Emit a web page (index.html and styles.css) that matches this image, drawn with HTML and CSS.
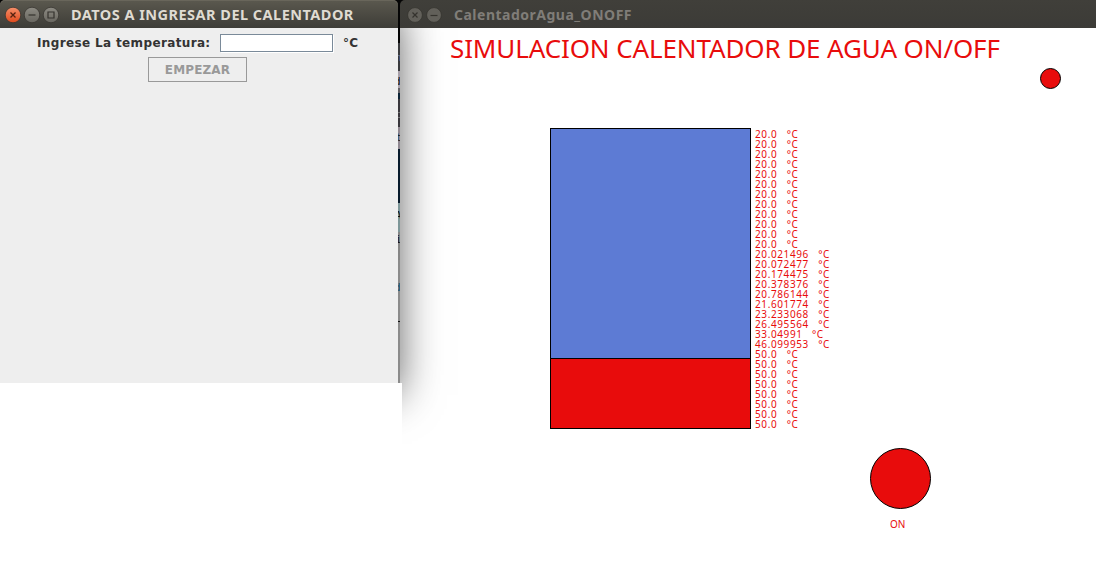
FILE: index.html
```html
<!DOCTYPE html>
<html lang="es">
<head>
<meta charset="utf-8">
<title>CalentadorAgua_ONOFF</title>
<link rel="stylesheet" href="styles.css">
</head>
<body>
<div class="desktop">
  <div class="backdrop"><span class="bit b1">n</span><span class="bit b2">d</span><span class="bit b3">c</span><span class="bit b4">t</span><span class="bit b5">A</span><span class="bit b6">i</span><span class="bit b7">d</span><span class="bit b8">L</span></div>
  <section class="window sim">
    <header class="titlebar dim">
      <svg class="ctl" viewBox="0 0 16 16"><circle cx="8" cy="8" r="7.4"/><path d="M5.5 5.5l5 5M10.5 5.5l-5 5"/></svg>
      <svg class="ctl" viewBox="0 0 16 16"><circle cx="8" cy="8" r="7.4"/><path d="M4.5 8.5h7"/></svg>
      <span class="caption sim-caption">CalentadorAgua_ONOFF</span>
    </header>
    <main class="canvas">
      <h1 class="heading">SIMULACION CALENTADOR DE AGUA ON/OFF</h1>
      <div class="lamp small"></div>
      <div class="heater">
        <div class="tank"><div class="cold"></div><div class="hot"></div></div>
        <ul class="readings">
          <li>20.0<i>°C</i></li><li>20.0<i>°C</i></li><li>20.0<i>°C</i></li><li>20.0<i>°C</i></li>
          <li>20.0<i>°C</i></li><li>20.0<i>°C</i></li><li>20.0<i>°C</i></li><li>20.0<i>°C</i></li>
          <li>20.0<i>°C</i></li><li>20.0<i>°C</i></li><li>20.0<i>°C</i></li><li>20.0<i>°C</i></li>
          <li>20.021496<i>°C</i></li><li>20.072477<i>°C</i></li><li>20.174475<i>°C</i></li>
          <li>20.378376<i>°C</i></li><li>20.786144<i>°C</i></li><li>21.601774<i>°C</i></li>
          <li>23.233068<i>°C</i></li><li>26.495564<i>°C</i></li><li>33.04991<i>°C</i></li>
          <li>46.099953<i>°C</i></li>
          <li>50.0<i>°C</i></li><li>50.0<i>°C</i></li><li>50.0<i>°C</i></li><li>50.0<i>°C</i></li>
          <li>50.0<i>°C</i></li><li>50.0<i>°C</i></li><li>50.0<i>°C</i></li><li>50.0<i>°C</i></li>
        </ul>
      </div>
      <div class="status"><div class="lamp big"></div><span class="state">ON</span></div>
    </main>
  </section>
  <div class="shade-clip"><div class="shade"></div></div>
  <section class="window dialog">
    <header class="titlebar">
      <svg class="ctl close" viewBox="0 0 16 16"><defs><linearGradient id="o" x2="0" y2="1"><stop stop-color="#f5906b"/><stop offset="1" stop-color="#e0491b"/></linearGradient><linearGradient id="g" x2="0" y2="1"><stop stop-color="#8d8b83"/><stop offset="1" stop-color="#67655e"/></linearGradient></defs><circle cx="8" cy="8" r="7.8" fill="url(#o)"/><path d="M5.5 5.5l5 5M10.5 5.5l-5 5"/></svg>
      <svg class="ctl" viewBox="0 0 16 16"><circle cx="8" cy="8" r="7.8" fill="url(#g)"/><path d="M4.5 8h7"/></svg>
      <svg class="ctl" viewBox="0 0 16 16"><circle cx="8" cy="8" r="7.8" fill="url(#g)"/><path d="M5 5h6v6h-6z"/></svg>
      <span class="caption dialog-caption">DATOS A INGRESAR DEL CALENTADOR</span>
    </header>
    <form class="form">
      <div class="row"><label class="label" for="temp">Ingrese La temperatura:</label><input class="field" id="temp"><span class="unit">°C</span></div>
      <button class="start" type="button" disabled>EMPEZAR</button>
    </form>
  </section>
</div>
</body>
</html>
```

FILE: styles.css
```css
* { box-sizing: border-box; }
body { margin: 0; background: #fff; }
.desktop { position: relative; width: 1096px; height: 568px; overflow: hidden; background: #fff; }

.backdrop {
  position: absolute; left: 394px; top: 0; width: 12px; height: 383px; overflow: hidden;
  background: linear-gradient(#050505 0 43px, #393a3d 43px 71px, #a79fa8 71px 88px, #626065 88px 93px, #0c2436 93px 99px, #38363b 99px 127px, #8f8790 127px 149px, #071a2b 149px 203px, #7d9698 203px 232px, #858585 232px 260px, #8b8b8b 260px);
}
.bit { position: absolute; left: 1px; font: 11px/12px "DejaVu Sans Mono", monospace; color: #111; }
.b1 { top: 52px; color: #69718d; }
.b2 { top: 76px; left: 0; }
.b3 { top: 109px; color: #777; }
.b4 { top: 132px; }
.b5 { top: 210px; }
.b6 { top: 234px; }
.b7 { top: 282px; left: 0; color: #174e6a; }
.b8 { top: 313px; }

.window { position: absolute; }
.titlebar {
  display: flex; align-items: center; height: 28px; gap: 3px; padding-left: 5px;
  border-radius: 5px 5px 0 0; background: linear-gradient(#5b594f, #55534a 20%, #3d3c37);
  box-shadow: inset 0 1px #69665b;
}
.titlebar.dim { background: linear-gradient(#403f3a, #3c3b37); box-shadow: none; padding-left: 7px; }
.ctl { width: 16px; height: 16px; flex: none; overflow: visible; margin-top: 1px; }
.ctl circle { stroke: #383631; stroke-width: .8; }
.ctl path { fill: none; stroke: #35332e; stroke-width: 1.2; }
.close path { stroke: #54210f; stroke-width: 1.3; }
.dim .ctl circle { fill: #62605a; stroke: #35342f; }
.caption { color: #dfdbd2; font: bold 14px/20px "Noto Sans", sans-serif; white-space: nowrap; margin-top: 1px; }
.dialog-caption { margin: -1px 0 0 9px; font-size: 14.5px; letter-spacing: .47px; }
.sim-caption { margin-left: 9px; color: #807d78; letter-spacing: .5px; }

.sim { left: 400px; top: 0; width: 696px; height: 568px; }
.sim .titlebar { border-top-right-radius: 0; }
.canvas { height: 540px; background: #fff; display: grid; grid-template-rows: 100px 320px 1fr; grid-template-columns: 640px 1fr; color: #e80c0c; }
.heading { margin: 1px 0 0 50px; font: 26px/38px "Noto Sans", sans-serif; letter-spacing: -.12px; white-space: nowrap; }
.lamp { border: 1px solid #000; border-radius: 50%; background: #e80c0c; }
.small { width: 21px; height: 21px; margin-top: 40px; }
.heater { grid-column: 1 / -1; display: flex; padding-left: 150px; gap: 4px; }
.tank { width: 201px; height: 301px; border: 1px solid #000; display: flex; flex-direction: column; }
.cold { flex: 1; background: #5d7bd4; }
.hot { height: 70px; background: #e80c0c; border-top: 1px solid #000; }
.readings { list-style: none; margin: 1px 0 0; padding: 0; font: 10px/10px "Noto Sans", sans-serif; letter-spacing: .6px; }
.readings li { height: 10px; white-space: nowrap; }
.readings i { font-style: normal; margin-left: 9.4px; letter-spacing: .6px; }
.status { grid-column: 1 / -1; width: 61px; margin-left: 470px; }
.big { width: 61px; height: 61px; }
.state { display: block; margin: 9px 0 0 20px; font: 10px/12px "Noto Sans", sans-serif; }

.shade-clip { position: absolute; left: 400px; top: 28px; width: 70px; height: 440px; overflow: hidden; }
.shade { position: absolute; left: -400px; top: -28px; width: 398px; height: 383px; box-shadow: 0 12px 40px rgba(0, 0, 0, .65); }

.desktop::after { content: ""; position: absolute; left: 0; top: 383px; width: 402px; height: 185px; background: #fff; }
.dialog { left: 0; top: 0; width: 398px; height: 383px; background: linear-gradient(#050505 0 10px, #eee 10px); }
.form { display: flex; flex-direction: column; align-items: center; padding-top: 5px; }
.row { display: flex; align-items: center; height: 19px; width: 324px; }
.label, .unit, .start { font: bold 12px/16px "DejaVu Sans", sans-serif; color: #333; }
.label { width: 183px; letter-spacing: .36px; white-space: nowrap; }
.field { width: 113px; height: 18px; padding: 0; border: 1px solid #7a8a99; background: #fff; box-shadow: 1px 1px #fff; }
.unit { margin-left: 10px; letter-spacing: .3px; }
.start { width: 99px; height: 25px; margin: 5px 3px 0 0; padding: 0; background: #eee; border: 1px solid #999; color: #999; letter-spacing: .15px; }
```
